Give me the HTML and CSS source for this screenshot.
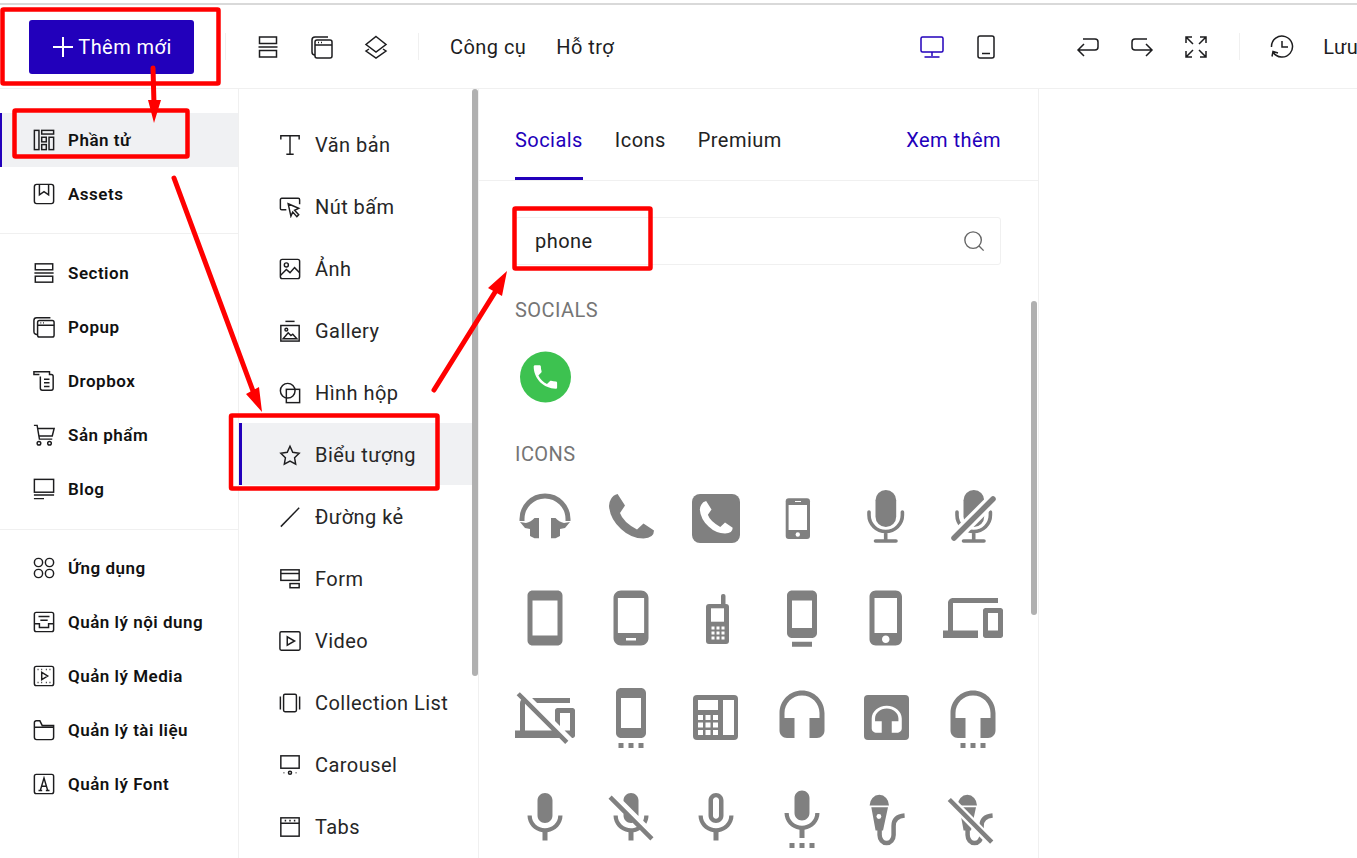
FILE: index.html
```html
<!DOCTYPE html>
<html lang="vi">
<head>
	<meta charset="UTF-8">
	<title>Thêm mới</title>
	<link rel="stylesheet" href="styles.css">
</head>
<body>
	<div class="strip"></div>
	<header class="topbar">
		<button class="btn-add"><svg class="plus" viewBox="0 0 20 20"><path d="M10 0V20M0 10H20"/></svg>Thêm mới</button>
		<span class="sep sep-first"></span>
		<svg class="ic ic-gap" viewBox="0 0 24 24"><rect x="3.5" y="2" width="17" height="6.5"/><path d="M2.5 12H21.5"/><rect x="3.5" y="15.5" width="17" height="6.5"/></svg>
		<svg class="ic ic-gap" viewBox="0 0 24 24"><rect x="5" y="5" width="17" height="18" rx="2"/><path d="M5 10H22M18 2H5A3 3 0 0 0 2 5V17A3 3 0 0 0 5 20M8 7.5H9M11 7.5H12"/></svg>
		<svg class="ic ic-gap" viewBox="0 0 24 24"><path d="M12 1.5L22 9.5L12 17L2 9.5ZM5 14L2 16L12 23L22 16L19 14"/></svg>
		<span class="sep sep-mid"></span>
		<a class="menu menu-first">Công cụ</a>
		<a class="menu menu-next">Hỗ trợ</a>
		<svg class="ic ic-blue ic-desktop" viewBox="0 0 24 24"><rect x="1" y="2" width="22" height="15" rx="1.5"/><path d="M12 17V21M4.5 22H19.5"/></svg>
		<svg class="ic ic-gap" viewBox="0 0 24 24"><rect x="4" y="1" width="16" height="22" rx="2"/><path d="M8 18.5H16"/></svg>
		<svg class="ic ic-undo" viewBox="0 0 24 24"><path d="M7 4H19A3 3 0 0 1 22 7V12A3 3 0 0 1 19 15H2M8 9L2 15L8 21"/></svg>
		<svg class="ic ic-gap" viewBox="0 0 24 24"><path d="M17 4H5A3 3 0 0 0 2 7V12A3 3 0 0 0 5 15H22M16 9L22 15L16 21"/></svg>
		<svg class="ic ic-gap" viewBox="0 0 24 24"><path d="M2 8V2H8M16 2H22V8M22 16V22H16M8 22H2V16M2 2L9 9M22 2L15 9M22 22L15 15M2 22L9 15"/></svg>
		<span class="sep sep-right"></span>
		<svg class="ic ic-gap" viewBox="0 0 24 24"><path d="M3 17A10.5 10.5 0 1 0 1.5 12M12 6V12H18M2 21.5L3 16.5L8 18"/></svg>
		<a class="menu menu-save">Lưu</a>
	</header>

	<main class="workspace">
		<nav class="side">
			<div class="side-group">
				<a class="side-item is-active"><svg class="ic" viewBox="0 0 24 24"><rect x="1.5" y="1.5" width="5" height="21"/><rect x="9.5" y="1.5" width="13" height="4"/><rect x="9.5" y="9" width="5" height="5"/><rect x="17.5" y="9" width="5" height="13.5"/><rect x="9.5" y="17" width="5" height="5.5"/></svg>Phần tử</a>
				<a class="side-item"><svg class="ic" viewBox="0 0 24 24"><rect x="1.5" y="1.5" width="21" height="21" rx="2.5"/><path d="M7 1.5V13L12 9.5L17 13V1.5"/></svg>Assets</a>
			</div>
			<div class="side-group">
				<a class="side-item"><svg class="ic" viewBox="0 0 24 24"><rect x="2.5" y="2" width="19" height="6.5"/><path d="M1.5 12H22.5"/><rect x="2.5" y="15.5" width="19" height="6.5"/></svg>Section</a>
				<a class="side-item"><svg class="ic" viewBox="0 0 24 24"><rect x="5" y="5" width="18" height="18" rx="2"/><path d="M5 10H23M19 2H4A3 3 0 0 0 1 5V17A3 3 0 0 0 5 20M8 7.5H9M11 7.5H12"/></svg>Popup</a>
				<a class="side-item"><svg class="ic" viewBox="0 0 24 24"><path d="M8 7V20A2 2 0 0 0 10 22H20A2 2 0 0 0 22 20V7A2 2 0 0 0 20 5H18V2H1V5H7M12 10H18M12 14H18M12 18H18"/></svg>Dropbox</a>
				<a class="side-item"><svg class="ic" viewBox="0 0 24 24"><circle cx="6.5" cy="21" r="2"/><circle cx="18" cy="21" r="2"/><path d="M1 1.5H4.5L7 16.5H21M5.2 5H23L21 13H6.6"/></svg>Sản phẩm</a>
				<a class="side-item"><svg class="ic" viewBox="0 0 24 24"><rect x="1.5" y="1.5" width="21" height="14"/><path d="M1 18.5H23M1 22.5H12"/></svg>Blog</a>
			</div>
			<div class="side-group side-last">
				<a class="side-item"><svg class="ic" viewBox="0 0 24 24"><circle cx="6" cy="6" r="4.5"/><circle cx="18" cy="6" r="4.5"/><circle cx="6" cy="18" r="4.5"/><circle cx="18" cy="18" r="4.5"/></svg>Ứng dụng</a>
				<a class="side-item"><svg class="ic" viewBox="0 0 24 24"><rect x="1.5" y="1.5" width="21" height="21" rx="2"/><path d="M6 6H18M8 10H16M1.5 14H7V18H17V14H22.5"/></svg>Quản lý nội dung</a>
				<a class="side-item"><svg class="ic" viewBox="0 0 24 24"><rect x="1.5" y="1.5" width="21" height="21" rx="2"/><path d="M9.5 8V16L16 12ZM5 5H6M9 5H10M14 5H15M18 5H19M5 19H6M9 19H10M14 19H15M18 19H19"/></svg>Quản lý Media</a>
				<a class="side-item"><svg class="ic" viewBox="0 0 24 24"><path d="M1.5 9V20A2.5 2.5 0 0 0 4 22.5H20A2.5 2.5 0 0 0 22.5 20V7H10L7.5 2H3.5A2 2 0 0 0 1.5 4ZM1.5 9H22.5"/></svg>Quản lý tài liệu</a>
				<a class="side-item"><svg class="ic" viewBox="0 0 24 24"><rect x="1.5" y="1.5" width="21" height="21" rx="2"/><path d="M6 19H10M14 19H18M8 19L12 5.5L16 19M9.2 14.5H14.8"/></svg>Quản lý Font</a>
			</div>
		</nav>

		<section class="elements">
			<a class="el-item"><svg class="ic" viewBox="0 0 24 24"><path d="M2 6V2H22V6M12 2V22M8 22H16"/></svg>Văn bản</a>
			<a class="el-item"><svg class="ic" viewBox="0 0 24 24"><path d="M8 15H3A1.5 1.5 0 0 1 1.5 13.5V4A1.5 1.5 0 0 1 3 2.5H21A1.5 1.5 0 0 1 22.5 4V9M10 8.5L21.5 13.5L17 15.5L21.5 20.5L19.5 22.5L15 17.5L13 22Z"/></svg>Nút bấm</a>
			<a class="el-item"><svg class="ic" viewBox="0 0 24 24"><rect x="1.5" y="1.5" width="21" height="21" rx="2"/><circle cx="8" cy="7.5" r="2.2"/><path d="M1.5 19L8 12.5L12 16L17 10.5L22.5 16"/></svg>Ảnh</a>
			<a class="el-item"><svg class="ic" viewBox="0 0 24 24"><path d="M7 1.5H17"/><rect x="2" y="6" width="20" height="17"/><circle cx="8" cy="10.5" r="1.5"/><path d="M4.5 20.5L10 14L13 17L15 15.5L19.5 20.5Z"/></svg>Gallery</a>
			<a class="el-item"><svg class="ic" viewBox="0 0 24 24"><circle cx="9.5" cy="9.5" r="8"/><rect x="8" y="8" width="14.5" height="14.5"/></svg>Hình hộp</a>
			<a class="el-item is-active"><svg class="ic" viewBox="0 0 24 24"><path d="M12 2.5L15 9L22 10L17 15L18.2 22L12 18.6L5.8 22L7 15L2 10L9 9Z"/></svg>Biểu tượng</a>
			<a class="el-item"><svg class="ic" viewBox="0 0 24 24"><path d="M2 22.5L22 2"/></svg>Đường kẻ</a>
			<a class="el-item"><svg class="ic" viewBox="0 0 24 24"><rect x="2" y="2" width="20" height="11.5"/><path d="M2 6H22"/><rect x="12" y="17" width="10" height="4.5"/></svg>Form</a>
			<a class="el-item"><svg class="ic" viewBox="0 0 24 24"><rect x="1" y="2" width="22" height="20" rx="1.5"/><path d="M9 7.5V16.5L17 12Z"/></svg>Video</a>
			<a class="el-item"><svg class="ic" viewBox="0 0 24 24"><rect x="5" y="2.5" width="14" height="19" rx="1.5"/><path d="M1.5 5V19M22.5 5V19"/></svg>Collection List</a>
			<a class="el-item"><svg class="ic" viewBox="0 0 24 24"><rect x="2" y="2" width="20" height="13.5"/><circle cx="12" cy="20.5" r="1.7"/><path d="M5 20.5H5.8M18.2 20.5H19"/></svg>Carousel</a>
			<a class="el-item"><svg class="ic" viewBox="0 0 24 24"><rect x="2" y="2" width="20" height="20"/><path d="M2 8H22M7 4V6M12 4V6M17 4V6"/></svg>Tabs</a>
			<div class="thumb thumb-elements"></div>
		</section>

		<section class="panel">
			<div class="tabs">
				<a class="tab is-active">Socials</a>
				<a class="tab">Icons</a>
				<a class="tab">Premium</a>
				<a class="tab-more">Xem thêm</a>
			</div>
			<div class="search">
				<span class="search-text">phone</span>
				<svg class="search-icon" viewBox="0 0 24 24"><circle cx="11" cy="11" r="9"/><path d="M17.5 17.5L22.5 22.5"/></svg>
			</div>
			<h4 class="group-title">SOCIALS</h4>
			<svg class="social" viewBox="0 0 60 60"><circle cx="30.5" cy="30" r="25.5" fill="#3dc250"/><path fill="#fff" transform="translate(14.8 14.4) scale(1.3)" d="M6.62 10.79c1.44 2.83 3.76 5.14 6.59 6.59l2.2-2.2c.27-.27.67-.36 1.02-.24 1.12.37 2.33.57 3.57.57.55 0 1 .45 1 1V20c0 .55-.45 1-1 1-9.39 0-17-7.61-17-17 0-.55.45-1 1-1h3.5c.55 0 1 .45 1 1 0 1.25.2 2.45.57 3.57.11.35.03.74-.25 1.02l-2.2 2.2z"/></svg>
			<h4 class="group-title group-icons">ICONS</h4>
			<div class="icon-grid">
				<svg viewBox="0 0 60 60"><path fill="none" stroke="#808080" stroke-width="5" d="M7 33V31A23 23 0 0 1 53 31V33"/><path d="M5 34L10 40L15 41V48L19.5 50.3H24V30H19.5Q16 34 11 35ZM55 34L50 40L45 41V48L40.5 50.3H36V30H40.5Q44 34 49 35Z"/></svg>
				<svg viewBox="0 0 60 60"><path d="M10 11Q12 7 16.6 6L24 17.5L19 25Q22 34 36 41.5L42.5 35.5L53 42.5Q53 50 42.5 50.5Q30 50.5 20 41Q9 31 8 18Q8 14 10 11Z"/></svg>
				<svg viewBox="0 0 60 60"><rect x="6" y="6" width="48" height="49" rx="8"/><path fill="#fff" transform="translate(8 8.6) scale(.73)" d="M10 11Q12 7 16.6 6L24 17.5L19 25Q22 34 36 41.5L42.5 35.5L53 42.5Q53 50 42.5 50.5Q30 50.5 20 41Q9 31 8 18Q8 14 10 11Z"/></svg>
				<svg viewBox="0 0 60 60"><rect x="13.7" y="10.3" width="24.3" height="40.7" rx="3"/><rect x="16.6" y="17" width="18.4" height="25" fill="#fff"/><circle cx="25.8" cy="46.5" r="2.2" fill="#fff"/><rect x="23" y="13" width="6" height="1" fill="#fff"/></svg>
				<svg viewBox="0 0 60 60"><rect x="18.5" y="2" width="20.7" height="37" rx="10.3"/><path fill="none" stroke="#808080" stroke-width="3.6" stroke-linecap="round" d="M12 24V27A16.7 16.5 0 0 0 45.4 27V24M28.7 44V52M18.5 53H39"/></svg>
				<svg viewBox="0 0 60 60"><rect x="20.5" y="2" width="20.7" height="37" rx="10.3"/><path fill="none" stroke="#808080" stroke-width="3.6" stroke-linecap="round" d="M14 24V27A16.7 16.5 0 0 0 47.4 27V24M30.7 44V52M20.5 53H41"/><path fill="none" stroke="#fff" stroke-width="12" d="M7 54L54 7"/><path fill="none" stroke="#808080" stroke-width="5.5" stroke-linecap="round" d="M11 50L50 11"/></svg>

				<svg viewBox="0 0 24 24"><path d="M17 1.01L7 1c-1.1 0-2 .9-2 2v18c0 1.1.9 2 2 2h10c1.1 0 2-.9 2-2V3c0-1.1-.9-1.99-2-1.99zM17 19H7V5h10v14z"/></svg>
				<svg viewBox="0 0 24 24"><path d="M16 1H8C6.34 1 5 2.34 5 4v16c0 1.66 1.34 3 3 3h8c1.66 0 3-1.34 3-3V4c0-1.66-1.34-3-3-3zm-2 20h-4v-1h4v1zm3.25-3H6.75V4h10.5v14z"/></svg>
				<svg viewBox="0 0 60 60"><rect x="35" y="6" width="4.5" height="12" rx="2"/><rect x="20" y="16" width="23" height="40" rx="3"/><rect x="25" y="20.3" width="13" height="13.4" fill="#fff"/><path fill="#fff" d="M25.5 38.5h3v3h-3zM30.5 38.5h3v3h-3zM35.5 38.5h3v3h-3zM25.5 43.5h3v3h-3zM30.5 43.5h3v3h-3zM35.5 43.5h3v3h-3zM25.5 48.5h3v3h-3zM30.5 48.5h3v3h-3zM35.5 48.5h3v3h-3z"/></svg>
				<svg viewBox="0 0 24 24"><path d="M8 23.5h8v-2H8v2zm8-22.49L8 1c-1.1 0-2 .9-2 2v15c0 1.1.9 2 2 2h8c1.1 0 2-.9 2-2V3c0-1.1-.9-1.99-2-1.99zM16 16H8V5h8v11z"/></svg>
				<svg viewBox="0 0 24 24"><path d="M15.5 1h-8C6.12 1 5 2.12 5 3.5v17C5 21.88 6.12 23 7.5 23h8c1.38 0 2.5-1.12 2.5-2.5v-17C18 2.12 16.88 1 15.5 1zm-4 21c-.83 0-1.5-.67-1.5-1.5s.67-1.5 1.5-1.5 1.5.67 1.5 1.5-.67 1.5-1.5 1.5zm4.5-4H7V4h9v14z"/></svg>
				<svg viewBox="0 0 24 24"><path d="M4 6h18V4H4c-1.1 0-2 .9-2 2v11H0v3h14v-3H4V6zm19 2h-6c-.55 0-1 .45-1 1v10c0 .55.45 1 1 1h6c.55 0 1-.45 1-1V9c0-.55-.45-1-1-1zm-1 9h-4v-7h4v7z"/></svg>

				<svg viewBox="0 0 24 24"><path d="M22 6V4H6.82l2 2H22zM1.92 1.65L.65 2.92l1.82 1.82C2.18 5.08 2 5.52 2 6v11H0v3h17.73l2.35 2.35 1.27-1.27L3.89 3.62 1.92 1.65zM4 6.27L14.73 17H4V6.27zM23 8h-6c-.55 0-1 .45-1 1v4.18l2 2V10h4v7h-2.18l3 3H23c.55 0 1-.45 1-1V9c0-.55-.45-1-1-1z"/></svg>
				<svg viewBox="0 0 24 24"><path d="M7 24h2v-2H7v2zm4 0h2v-2h-2v2zm4 0h2v-2h-2v2zM16 .01L8 0C6.9 0 6 .9 6 2v16c0 1.1.9 2 2 2h8c1.1 0 2-.9 2-2V2c0-1.1-.9-1.99-2-1.99zM16 16H8V4h8v12z"/></svg>
				<svg viewBox="0 0 60 60"><rect x="7" y="7" width="45" height="45" rx="4"/><path fill="#fff" d="M12 12h20v10H12zM37 12h11v35H37zM12 27h5v5h-5zM19.5 27h5v5h-5zM27 27h5v5h-5zM12 34.5h5v5h-5zM19.5 34.5h5v5h-5zM27 34.5h5v5h-5zM12 42h5v5h-5zM19.5 42h5v5h-5zM27 42h5v5h-5z"/></svg>
				<svg viewBox="0 0 24 24"><path d="M12 1c-4.97 0-9 4.03-9 9v7c0 1.66 1.34 3 3 3h3v-8H5v-2c0-3.87 3.13-7 7-7s7 3.13 7 7v2h-4v8h3c1.66 0 3-1.34 3-3v-7c0-4.97-4.03-9-9-9z"/></svg>
				<svg viewBox="0 0 60 60"><rect x="7" y="7" width="45" height="45" rx="4"/><path fill="#fff" transform="translate(9.7 16.3) scale(1.67 1.42)" d="M12 1c-4.97 0-9 4.03-9 9v7c0 1.66 1.34 3 3 3h3v-8H5v-2c0-3.87 3.13-7 7-7s7 3.13 7 7v2h-4v8h3c1.66 0 3-1.34 3-3v-7c0-4.97-4.03-9-9-9z"/></svg>
				<svg viewBox="0 0 24 24"><path d="M7 24h2v-2H7v2zm4 0h2v-2h-2v2zm4 0h2v-2h-2v2zM12 1c-4.97 0-9 4.03-9 9v7c0 1.66 1.34 3 3 3h3v-8H5v-2c0-3.87 3.13-7 7-7s7 3.13 7 7v2h-4v8h3c1.66 0 3-1.34 3-3v-7c0-4.97-4.03-9-9-9z"/></svg>

				<svg viewBox="0 0 24 24"><path d="M12 14c1.66 0 2.99-1.34 2.99-3L15 5c0-1.66-1.34-3-3-3S9 3.34 9 5v6c0 1.66 1.34 3 3 3zm5.3-3c0 3-2.54 5.1-5.3 5.1S6.7 14 6.7 11H5c0 3.41 2.72 6.23 6 6.72V21h2v-3.28c3.28-.48 6-3.3 6-6.72h-1.7z"/></svg>
				<svg viewBox="0 0 24 24"><path d="M19 11h-1.7c0 .74-.16 1.43-.43 2.05l1.23 1.23c.56-.98.9-2.09.9-3.28zm-4.02.17c0-.06.02-.11.02-.17V5c0-1.66-1.34-3-3-3S9 3.34 9 5v.18l5.98 5.99zM4.27 3L3 4.27l6.01 6.01V11c0 1.66 1.33 3 2.99 3 .22 0 .44-.03.65-.08l1.66 1.66c-.71.33-1.5.52-2.31.52-2.76 0-5.3-2.1-5.3-5.1H5c0 3.41 2.72 6.23 6 6.72V21h2v-3.28c.91-.13 1.77-.45 2.54-.9L19.73 21 21 19.73 4.27 3z"/></svg>
				<svg viewBox="0 0 24 24"><path d="M12 14c1.66 0 3-1.34 3-3V5c0-1.66-1.34-3-3-3S9 3.34 9 5v6c0 1.66 1.34 3 3 3zm-1.2-9.1c0-.66.54-1.2 1.2-1.2.66 0 1.2.54 1.2 1.2l-.01 6.2c0 .66-.53 1.2-1.19 1.2-.66 0-1.2-.54-1.2-1.2V4.9zm6.5 6.1c0 3-2.54 5.1-5.3 5.1S6.7 14 6.7 11H5c0 3.41 2.72 6.23 6 6.72V21h2v-3.28c3.28-.48 6-3.3 6-6.72h-1.7z"/></svg>
				<svg viewBox="0 0 24 24"><path d="M7 24h2v-2H7v2zm5-11c1.66 0 2.99-1.34 2.99-3L15 4c0-1.66-1.34-3-3-3S9 2.34 9 4v6c0 1.66 1.34 3 3 3zm-1 11h2v-2h-2v2zm4 0h2v-2h-2v2zm4-14h-1.7c0 3-2.54 5.1-5.3 5.1S6.7 13 6.7 10H5c0 3.41 2.72 6.23 6 6.72V20h2v-3.28c3.28-.49 6-3.31 6-6.72z"/></svg>
				<svg viewBox="0 0 60 60"><path d="M12.6 17.5A9.7 10.7 0 0 1 32 17.5ZM14.3 19.2H31L26 42.5H18.6Z"/><circle cx="21.9" cy="28.5" r="2.4" fill="#fff"/><path fill="none" stroke="#808080" stroke-width="4.5" d="M22.6 42V47A7 8 0 0 0 36.6 47V38C36.6 31 41 28 47.6 27.5"/></svg>
				<svg viewBox="0 0 60 60"><g transform="translate(2 0)"><path d="M12.6 17.5A9.7 10.7 0 0 1 32 17.5ZM14.3 19.2H31L26 42.5H18.6Z"/><circle cx="21.9" cy="28.5" r="2.4" fill="#fff"/><path fill="none" stroke="#808080" stroke-width="4.5" d="M22.6 42V47A7 8 0 0 0 36.6 47V38C36.6 31 41 28 47.6 27.5"/></g><path fill="none" stroke="#fff" stroke-width="9" d="M3 8L52 58"/><path fill="none" stroke="#808080" stroke-width="4.5" d="M6.3 11.5L48.7 54.2"/></svg>
			</div>
			<div class="thumb thumb-panel"></div>
		</section>
	</main>

	<svg class="notes" viewBox="0 0 1357 858">
		<rect x="2.5" y="9.5" width="216" height="74" rx="1"/>
		<rect x="14.5" y="110.5" width="173" height="46" rx="1"/>
		<rect x="231" y="415.5" width="206.5" height="73" rx="1"/>
		<rect x="514.5" y="208.5" width="136" height="60" rx="1"/>
		<path class="note-line" d="M153 68L154 104M174 178L253 391M434 390L497 289"/>
		<path class="note-head" d="M148 100H161L154 123ZM246 394L259 387L262 412ZM488 288L502 296L507 271Z"/>
	</svg>
</body>
</html>
```

FILE: styles.css
```css
* {
	margin: 0;
	padding: 0;
	box-sizing: border-box;
}

html,
body {
	height: 100%;
	overflow: hidden;
}

body {
	position: relative;
	padding-top: 3px;
	background: #fff;
	color: #1d1d1f;
	font-family: Roboto, "Liberation Sans", sans-serif;
	font-size: 20px;
	letter-spacing: .45px;
}

.strip {
	height: 2px;
	background: #d9d9d9;
}

.topbar {
	display: flex;
	align-items: center;
	height: 84px;
	padding-left: 29px;
	border-bottom: 1px solid #f0f0f0;
	white-space: nowrap;
}

.btn-add {
	display: flex;
	align-items: center;
	justify-content: center;
	flex-shrink: 0;
	gap: 5px;
	width: 165px;
	height: 54px;
	padding-left: 2px;
	border: 0;
	border-radius: 3px;
	background: #2200bb;
	color: #fff;
	font: 20px Roboto, sans-serif;
	letter-spacing: .45px;
}

.plus {
	width: 20px;
	height: 20px;
	fill: none;
	stroke: #fff;
	stroke-width: 2;
}

.ic {
	flex-shrink: 0;
	width: 24px;
	height: 24px;
	fill: none;
	stroke: #1d1d1f;
	stroke-width: 1.5;
}

.ic-blue {
	stroke: #2200bb;
}

.ic-gap {
	margin-left: 30px;
}

.ic-desktop {
	margin-left: 306px;
}

.ic-undo {
	margin-left: 78px;
}

.sep {
	flex-shrink: 0;
	width: 1px;
	height: 27px;
	background: #f0f0f0;
}

.sep-first {
	margin-left: 31px;
}

.sep-mid {
	margin-left: 30px;
}

.sep-right {
	margin-left: 31px;
}

.menu {
	flex-shrink: 0;
}

.menu-first {
	margin-left: 31px;
}

.menu-next {
	margin-left: 30px;
}

.menu-save {
	margin-left: 29px;
}

.workspace {
	display: flex;
	height: 769px;
	overflow: hidden;
}

/* cot trai */
.side {
	flex-shrink: 0;
	width: 239px;
	border-right: 1px solid #f0f0f0;
}

.side-group {
	padding: 24px 0 13px;
	border-bottom: 1px solid #f0f0f0;
}

.side-group:first-child {
	height: 145px;
}

.side-group:nth-child(2) {
	height: 296px;
	padding-top: 12px;
}

.side-last {
	padding-top: 11px;
	border-bottom: 0;
}

.side-item {
	display: flex;
	align-items: center;
	gap: 13px;
	height: 54px;
	padding-left: 33px;
	font-size: 17px;
	font-weight: 600;
	letter-spacing: .5px;
	color: #111;
}

.side-item .ic {
	width: 22px;
	height: 22px;
	stroke-width: 1.6;
}

.side-item.is-active {
	padding-left: 31px;
	border-left: 2px solid #2200bb;
	background: #f0f1f3;
}

/* cot giua */
.elements {
	position: relative;
	flex-shrink: 0;
	width: 240px;
	padding-top: 24px;
	border-right: 1px solid #f0f0f0;
}

.el-item {
	display: flex;
	align-items: center;
	gap: 14px;
	height: 62px;
	padding: 2px 0 0 40px;
	color: #262626;
}

.el-item .ic {
	width: 22px;
	height: 22px;
	stroke-width: 1.6;
}

.el-item.is-active {
	padding-left: 37px;
	border-left: 3px solid #2200bb;
	background: #f0f1f3;
}

.thumb {
	position: absolute;
	width: 6px;
	border-radius: 3px;
	background: #b0b0b0;
}

.thumb-elements {
	top: 0;
	right: 0;
	height: 587px;
}

/* cot phai */
.panel {
	position: relative;
	flex-shrink: 0;
	width: 560px;
	padding: 0 35px 0 36px;
	border-right: 1px solid #f0f0f0;
}

.tabs {
	display: flex;
	gap: 32px;
	height: 92px;
	margin: 0 -35px 0 -36px;
	padding: 0 37px 0 36px;
	border-bottom: 1px solid #f0f0f0;
}

.tab {
	height: 91px;
	padding-top: 39px;
	color: #222;
}

.tab.is-active {
	border-bottom: 3px solid #2200bb;
	color: #2200bb;
}

.tab-more {
	margin-left: auto;
	padding-top: 39px;
	color: #2200bb;
}

.search {
	display: flex;
	align-items: center;
	justify-content: space-between;
	height: 48px;
	margin: 36px 2px 0 0;
	padding: 0 15px 0 19px;
	border: 1px solid #f0f0f0;
	border-radius: 3px;
	color: #222;
}

.search-icon {
	width: 22px;
	height: 22px;
	fill: none;
	stroke: #666;
	stroke-width: 1.5;
}

.group-title {
	margin-top: 33px;
	color: #757575;
	font-size: 20px;
	font-weight: 400;
	line-height: 24px;
}

.group-icons {
	margin-top: 35px;
}

.social {
	display: block;
	width: 60px;
	height: 60px;
	margin-top: 25px;
}

.icon-grid {
	display: grid;
	grid-template-columns: repeat(6, 60px);
	justify-content: space-between;
	row-gap: 40px;
	margin-top: 22px;
}

.icon-grid svg {
	width: 60px;
	height: 60px;
	overflow: visible;
	fill: #808080;
}

.thumb-panel {
	top: 212px;
	right: 1px;
	height: 314px;
}

/* chu thich do */
.notes {
	position: absolute;
	top: 0;
	left: 0;
	width: 1357px;
	height: 858px;
	fill: none;
	stroke: #f00;
	stroke-width: 4.5;
}

.note-line {
	stroke-width: 5;
	stroke-linecap: round;
}

.note-head {
	fill: #f00;
	stroke: none;
}
```
